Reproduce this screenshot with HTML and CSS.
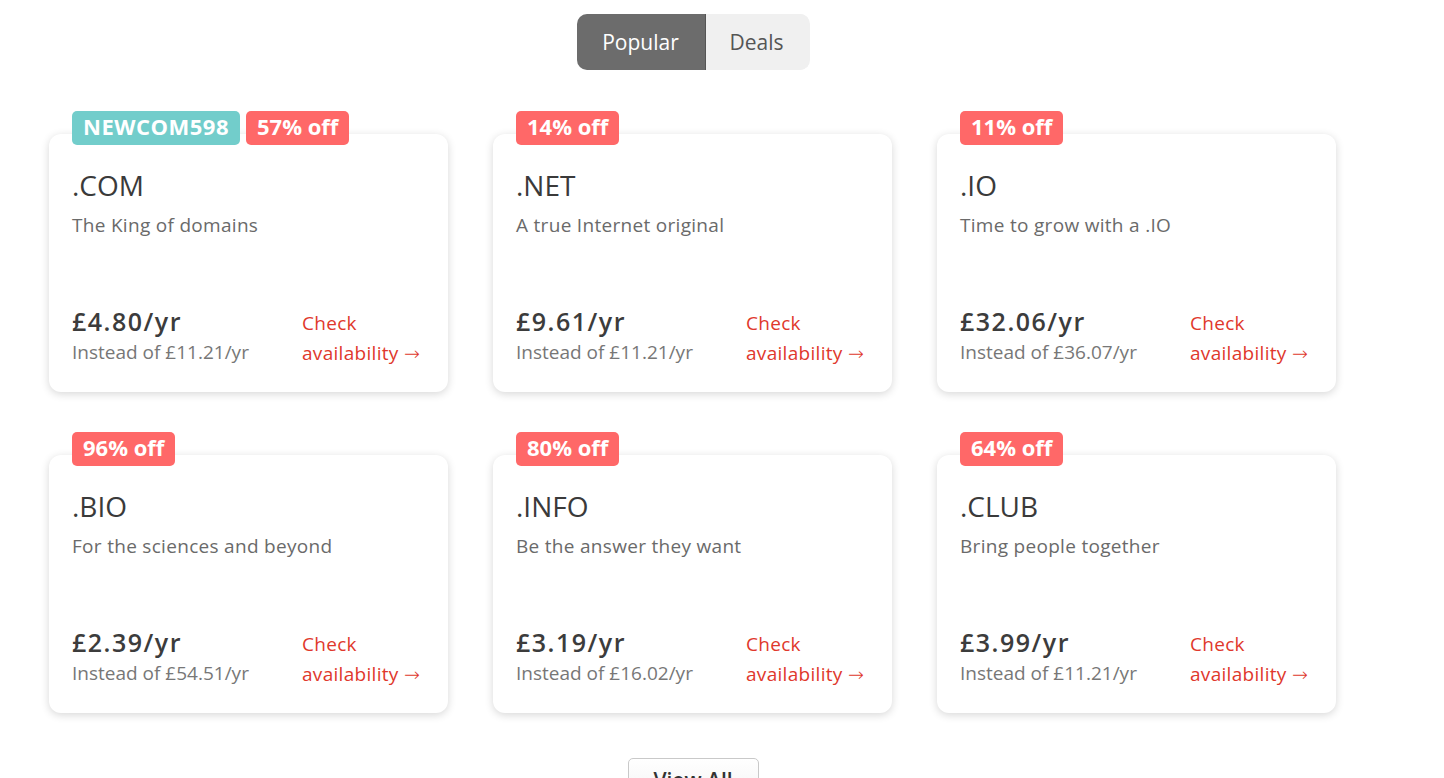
FILE: index.html
```html
<!DOCTYPE html>
<html lang="en">
<head>
<meta charset="utf-8">
<title>Domains</title>
<link rel="stylesheet" href="styles.css">
</head>
<body>
<div class="page">
  <div class="tabs">
    <button class="tab tab-active">Popular</button>
    <button class="tab">Deals</button>
  </div>

  <div class="grid">
    <div class="card">
      <div class="badges"><span class="badge badge-teal">NEWCOM598</span><span class="badge">57% off</span></div>
      <div class="tld">.COM</div>
      <div class="desc">The King of domains</div>
      <div class="bottom">
        <div class="prices"><div class="price">£4.80/yr</div><div class="old">Instead of £11.21/yr</div></div>
        <a class="check" href="#">Check<br>availability <span class="arrow">→</span></a>
      </div>
    </div>
    <div class="card">
      <div class="badges"><span class="badge">14% off</span></div>
      <div class="tld">.NET</div>
      <div class="desc">A true Internet original</div>
      <div class="bottom">
        <div class="prices"><div class="price">£9.61/yr</div><div class="old">Instead of £11.21/yr</div></div>
        <a class="check" href="#">Check<br>availability <span class="arrow">→</span></a>
      </div>
    </div>
    <div class="card">
      <div class="badges"><span class="badge">11% off</span></div>
      <div class="tld">.IO</div>
      <div class="desc">Time to grow with a .IO</div>
      <div class="bottom">
        <div class="prices"><div class="price">£32.06/yr</div><div class="old">Instead of £36.07/yr</div></div>
        <a class="check" href="#">Check<br>availability <span class="arrow">→</span></a>
      </div>
    </div>
    <div class="card">
      <div class="badges"><span class="badge">96% off</span></div>
      <div class="tld">.BIO</div>
      <div class="desc">For the sciences and beyond</div>
      <div class="bottom">
        <div class="prices"><div class="price">£2.39/yr</div><div class="old">Instead of £54.51/yr</div></div>
        <a class="check" href="#">Check<br>availability <span class="arrow">→</span></a>
      </div>
    </div>
    <div class="card">
      <div class="badges"><span class="badge">80% off</span></div>
      <div class="tld">.INFO</div>
      <div class="desc">Be the answer they want</div>
      <div class="bottom">
        <div class="prices"><div class="price">£3.19/yr</div><div class="old">Instead of £16.02/yr</div></div>
        <a class="check" href="#">Check<br>availability <span class="arrow">→</span></a>
      </div>
    </div>
    <div class="card">
      <div class="badges"><span class="badge">64% off</span></div>
      <div class="tld">.CLUB</div>
      <div class="desc">Bring people together</div>
      <div class="bottom">
        <div class="prices"><div class="price">£3.99/yr</div><div class="old">Instead of £11.21/yr</div></div>
        <a class="check" href="#">Check<br>availability <span class="arrow">→</span></a>
      </div>
    </div>
  </div>

  <div class="more">
    <div class="view-all">View All</div>
  </div>
</div>
</body>
</html>
```

FILE: styles.css
```css
html, body {
  margin: 0;
  padding: 0;
  background: #fff;
  height: 778px;
  overflow: hidden;
}
body {
  font-family: "Open Sans", "Liberation Sans", sans-serif;
  color: #333;
}
.page {
  width: 1386px;
  padding-top: 14px;
  box-sizing: border-box;
}
.tabs {
  display: flex;
  width: 233px;
  height: 56px;
  margin: 0 auto;
  border-radius: 10px;
  overflow: hidden;
  background: #f0f0f0;
}
.tab {
  border: 0;
  margin: 0;
  font-family: inherit;
  font-size: 21px;
  font-weight: 500;
  color: #555;
  background: #f0f0f0;
  padding: 0 24px;
  height: 56px;
}
.tab-active {
  background: #6c6c6c;
  color: #fff;
  width: 129px;
  border-right: 1px solid #555;
}
.grid {
  display: grid;
  grid-template-columns: repeat(3, 399px);
  column-gap: 45px;
  row-gap: 63px;
  padding: 0 49px;
  margin-top: 64px;
}
.card {
  position: relative;
  height: 258px;
  box-sizing: border-box;
  padding: 34px 23px 24px;
  background: #fff;
  border-radius: 12px;
  box-shadow: 0 2px 9px rgba(0, 0, 0, 0.16);
  display: flex;
  flex-direction: column;
}
.badges {
  position: absolute;
  top: -23px;
  left: 23px;
  display: flex;
  gap: 6px;
}
.badge {
  display: block;
  height: 34px;
  box-sizing: border-box;
  line-height: 31px;
  padding: 0 11px 3px;
  border-radius: 5px;
  background: #ff6868;
  color: #fff;
  font-size: 22px;
  font-weight: 700;
}
.badge-teal {
  background: #72cdcb;
  letter-spacing: 0.5px;
}
.tld {
  font-size: 28px;
  line-height: 34px;
  font-weight: 500;
  color: #3a3a3a;
}
.desc {
  margin-top: 10px;
  font-size: 19px;
  line-height: 26px;
  letter-spacing: 0.3px;
  color: #6a6a6a;
}
.bottom {
  margin-top: auto;
  display: flex;
  align-items: flex-start;
}
.prices {
  flex: 1;
}
.price {
  font-size: 25px;
  line-height: 30px;
  font-weight: 600;
  letter-spacing: 1.5px;
  color: #3c3c3c;
}
.old {
  margin-top: 4px;
  font-size: 19px;
  line-height: 24px;
  color: #777;
}
.check {
  width: 123px;
  margin-top: 2px;
  font-size: 19px;
  line-height: 30px;
  letter-spacing: 0.3px;
  color: #e0382c;
  text-decoration: none;
}
.arrow {
  font-family: "DejaVu Sans", sans-serif;
  font-weight: 300;
  letter-spacing: 0;
}
.more {
  display: flex;
  justify-content: center;
  margin-top: 45px;
}
.view-all {
  width: 131px;
  height: 50px;
  box-sizing: border-box;
  padding-top: 6px;
  line-height: 30px;
  text-align: center;
  border: 1px solid #c9c9c9;
  border-radius: 5px;
  background: linear-gradient(#ffffff, #f1f1f1);
  font-size: 21px;
  font-weight: 600;
  color: #333;
}
```
